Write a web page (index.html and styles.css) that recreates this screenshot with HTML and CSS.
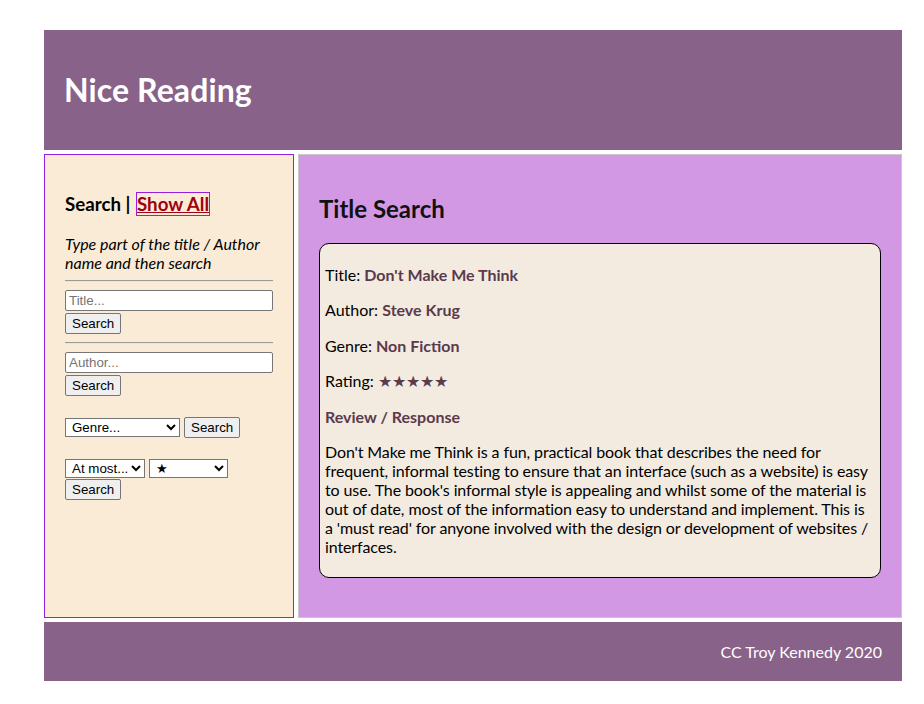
FILE: index.html
```html
<!DOCTYPE html>
<html lang="en">
<head>
<meta charset="utf-8">
<title>Nice Reading</title>
<link rel="stylesheet" href="styles.css">
</head>
<body>
<div class="page">
  <header class="site-header">
    <h1 class="brand">Nice Reading</h1>
  </header>
  <div class="columns">
    <aside class="sidebar">
      <h3 class="side-title">Search | <a href="#" class="show-all">Show All</a></h3>
      <em class="hint">Type part of the title / Author name and then search</em>
      <hr class="rule">
      <form class="search-form">
        <input class="text-input" type="text" placeholder="Title...">
        <button class="btn" type="button">Search</button>
      </form>
      <hr class="rule">
      <form class="search-form">
        <input class="text-input" type="text" placeholder="Author...">
        <button class="btn" type="button">Search</button>
      </form>
      <form class="search-form genre-form">
        <select class="genre-select"><option>Genre...</option></select>
        <button class="btn" type="button">Search</button>
      </form>
      <form class="search-form rating-form">
        <div class="select-row">
          <select class="most-select"><option>At most...</option></select>
          <select class="star-select"><option>★</option></select>
        </div>
        <button class="btn" type="button">Search</button>
      </form>
    </aside>
    <main class="content">
      <h2 class="content-title">Title Search</h2>
      <div class="book-card">
        <p class="field">Title: <span class="val">Don't Make Me Think</span></p>
        <p class="field">Author: <span class="val">Steve Krug</span></p>
        <p class="field">Genre: <span class="val">Non Fiction</span></p>
        <p class="field">Rating: <span class="stars">★★★★★</span></p>
        <p class="field"><span class="val">Review / Response</span></p>
        <p class="review">Don't Make me Think is a fun, practical book that describes the need for frequent, informal testing to ensure that an interface (such as a website) is easy to use. The book's informal style is appealing and whilst some of the material is out of date, most of the information easy to understand and implement. This is a 'must read' for anyone involved with the design or development of websites / interfaces.</p>
      </div>
    </main>
  </div>
  <footer class="site-footer">CC Troy Kennedy 2020</footer>
</div>
</body>
</html>
```
FILE: styles.css
```css
html, body {
  margin: 0;
  padding: 0;
  background: #ffffff;
}
body {
  font-family: Lato, "Open Sans", sans-serif;
  font-size: 16px;
  color: #000;
}
.page {
  width: 858px;
  margin: 30px 0 0 44px;
  display: flex;
  flex-direction: column;
  gap: 4px;
}
.site-header {
  background: #886288;
  height: 120px;
  display: flex;
  align-items: center;
  padding: 0 20px;
}
.brand {
  margin: 0 0 2px 0;
  color: #fff;
  font-family: Lato, sans-serif;
  font-weight: 700;
  font-size: 32px;
  letter-spacing: 0.1px;
}
.columns {
  display: grid;
  grid-template-columns: 250px 1fr;
  gap: 4px;
}
.sidebar {
  background: #faebd7;
  border: 1px solid #9a1ee0;
  padding: 20px;
}
.side-title {
  font-family: Lato, sans-serif;
  font-size: 18.72px;
  font-weight: 700;
  margin: 18px 0 19px;
}
.show-all {
  color: #a0000f;
  outline: 1px solid #9a1ee0;
  font-weight: 700;
  margin-left: 2px;
}
.hint {
  display: block;
  font-style: italic;
  line-height: 19px;
}
.rule {
  margin: 8px 0;
  border: 0;
  border-top: 1px solid #9a9a9a;
  border-bottom: 1px solid #e6e6e6;
}
.search-form {
  margin: 0;
  display: flex;
  flex-direction: column;
  align-items: flex-start;
  gap: 2px;
}
.text-input {
  width: 208px;
  box-sizing: border-box;
  height: 21px;
  font-family: "Liberation Sans", Arial, sans-serif;
  font-size: 13.33px;
  border: 1px solid #767676;
  border-radius: 2px;
  padding: 1px 3px;
  background: #fff;
}
.btn {
  font-family: "Liberation Sans", Arial, sans-serif;
  font-size: 13.33px;
  height: 21px;
  padding: 1px 6px;
  border: 1px solid #767676;
  border-radius: 2px;
  background: #efefef;
  color: #000;
}
.genre-form {
  flex-direction: row;
  align-items: center;
  gap: 4px;
  margin-top: 21px;
}
.rating-form {
  margin-top: 21px;
  gap: 1px;
}
.select-row {
  display: flex;
  gap: 4px;
}
select {
  font-family: "Liberation Sans", Arial, sans-serif;
  font-size: 13.33px;
  height: 19px;
  border: 1px solid #767676;
  border-radius: 0;
  background: #fff;
  color: #000;
  padding: 0 0 0 2px;
}
.genre-select { width: 115px; }
.most-select { width: 80px; }
.star-select { width: 79px; }
.content {
  background: #d398e3;
  border: 1px solid #c8c8c8;
  padding: 20px;
}
.content-title {
  font-family: Lato, sans-serif;
  font-size: 24px;
  font-weight: 700;
  margin: 19px 0 20px;
  color: #111;
}
.book-card {
  background: #f3ebe0;
  border: 1px solid #000;
  border-radius: 10px;
  padding: 5px;
  margin-bottom: 19px;
}
.field {
  margin: 16px 0;
  line-height: 19.4px;
}
.val {
  color: #5a3a4c;
  font-weight: 700;
}
.stars {
  color: #5a3a4c;
}
.review {
  margin: 16px 0;
  line-height: 19px;
  letter-spacing: -0.11px;
}
.site-footer {
  background: #886288;
  color: #fff;
  height: 59px;
  display: flex;
  align-items: center;
  justify-content: flex-end;
  padding: 0 20px;
}
```
